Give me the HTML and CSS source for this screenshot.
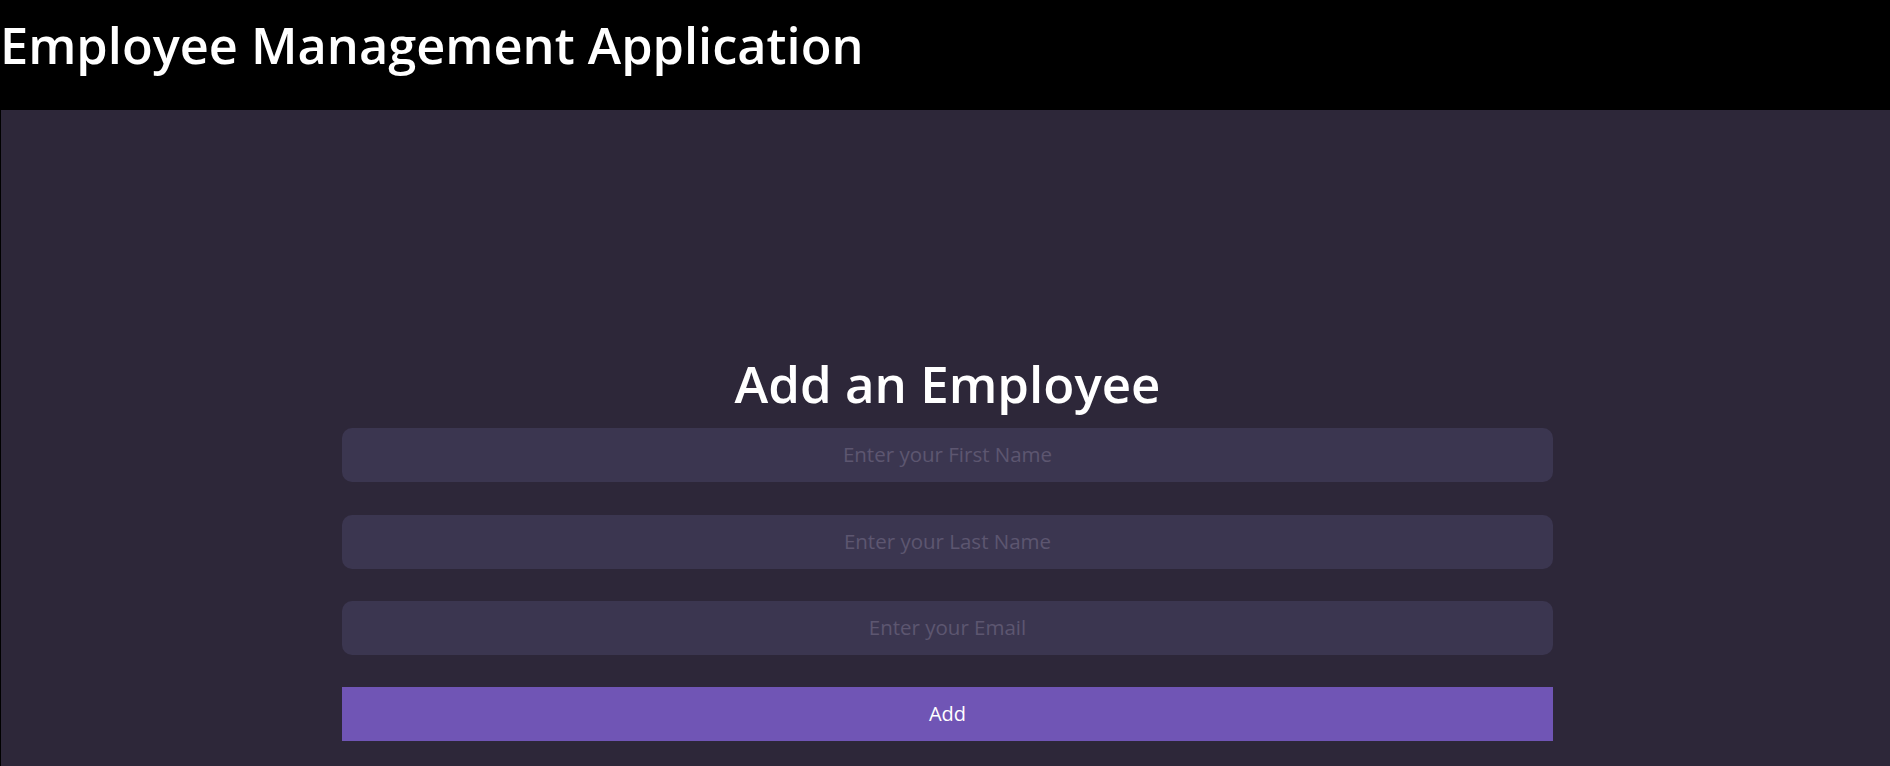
FILE: index.html
```html
<!DOCTYPE html>
<html lang="en">
<head>
<meta charset="utf-8">
<title>Employee Management Application</title>
<link rel="stylesheet" href="styles.css">
</head>
<body>
<header class="app-header">
  <h1 class="app-title">Employee Management Application</h1>
</header>
<main class="app-main">
  <form class="employee-form">
    <h2 class="form-title">Add an Employee</h2>
    <input class="form-input form-input--first" type="text" placeholder="Enter your First Name">
    <input class="form-input" type="text" placeholder="Enter your Last Name">
    <input class="form-input" type="email" placeholder="Enter your Email">
    <button class="form-button" type="button">Add</button>
  </form>
</main>
</body>
</html>
```

FILE: styles.css
```css
* { box-sizing: border-box; }

html, body {
  margin: 0;
  padding: 0;
}

body {
  background: #000;
  font-family: "Open Sans", "Noto Sans", sans-serif;
  min-height: 100vh;
  display: flex;
  flex-direction: column;
}

.app-header {
  height: 110px;
  background: #000;
  padding: 20px 0 0 0;
}

.app-title {
  margin: 0;
  color: #fff;
  font-size: 50.5px;
  line-height: 50.5px;
  font-weight: 600;
}

.app-main {
  flex: 1;
  margin-left: 1px;
  background: #2d2739;
  padding: 248px 0 0 4px;
}

.employee-form {
  width: 1211px;
  margin: 0 auto;
  display: flex;
  flex-direction: column;
  gap: 32px;
}

.form-title {
  margin: 0 0 -13px;
  color: #fff;
  font-size: 51px;
  line-height: 51px;
  font-weight: 600;
  text-align: center;
}

.form-input {
  height: 54px;
  padding: 0 0 2px;
  border: none;
  border-radius: 10px;
  background: #3b3650;
  color: #fff;
  font-family: inherit;
  font-size: 20.5px;
  text-align: center;
  outline: none;
}

.form-input--first {
  margin-bottom: 1px;
}

.form-input::placeholder {
  color: #5d5670;
}

.form-button {
  height: 54px;
  padding: 0 0 2px;
  border: none;
  border-radius: 0;
  background: #7055b5;
  color: #fff;
  font-family: inherit;
  font-size: 20px;
  cursor: pointer;
}
```
